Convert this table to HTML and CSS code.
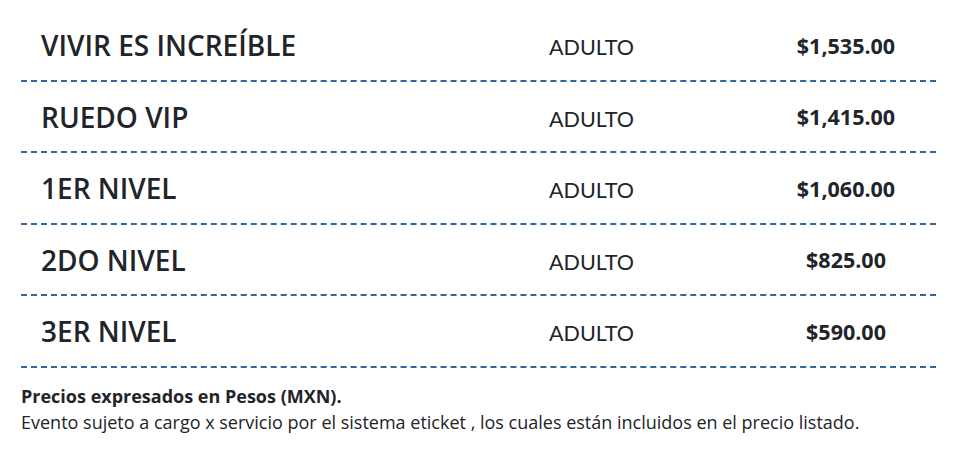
FILE: index.html
```html
<!DOCTYPE html>
<html lang="es">
<head>
<meta charset="utf-8">
<link rel="stylesheet" href="styles.css">
</head>
<body>
<div class="prices">
  <div class="row"><div class="name">VIVIR ES INCREÍBLE</div><div class="type">ADULTO</div><div class="price">$1,535.00</div></div>
  <div class="row"><div class="name">RUEDO VIP</div><div class="type">ADULTO</div><div class="price">$1,415.00</div></div>
  <div class="row"><div class="name">1ER NIVEL</div><div class="type">ADULTO</div><div class="price">$1,060.00</div></div>
  <div class="row"><div class="name">2DO NIVEL</div><div class="type">ADULTO</div><div class="price">$825.00</div></div>
  <div class="row"><div class="name">3ER NIVEL</div><div class="type">ADULTO</div><div class="price">$590.00</div></div>
</div>
<div class="notes">
  <p class="bold">Precios expresados en Pesos (MXN).</p>
  <p>Evento sujeto a cargo x servicio por el sistema eticket , los cuales están incluidos en el precio listado.</p>
</div>
</body>
</html>
```
FILE: styles.css
```css
html, body { margin: 0; padding: 0; background: #fff; }
body {
  padding: 10px 25px 0 21px;
  font-family: "Open Sans", "Liberation Sans", sans-serif;
  color: #212529;
}
.prices { width: 915px; }
.row {
  display: grid;
  grid-template-columns: 508px 227px 180px;
  align-items: center;
  height: 69.5px;
  border-bottom: 2px dashed #336699;
}
.name {
  padding-left: 20px;
  font-size: 28px;
  font-weight: 600;
  padding-top: 1px;
}
.type {
  padding-left: 20px;
  font-family: Lato, "Open Sans", sans-serif;
  font-size: 21.5px;
  padding-top: 5px;
}
.price {
  text-align: center;
  font-size: 21.5px;
  font-weight: 700;
  padding-top: 1px;
}
.notes {
  margin-top: 15px;
  font-size: 18px;
  line-height: 26px;
}
.notes p { margin: 0; }
.notes .bold { font-weight: 700; }
```
